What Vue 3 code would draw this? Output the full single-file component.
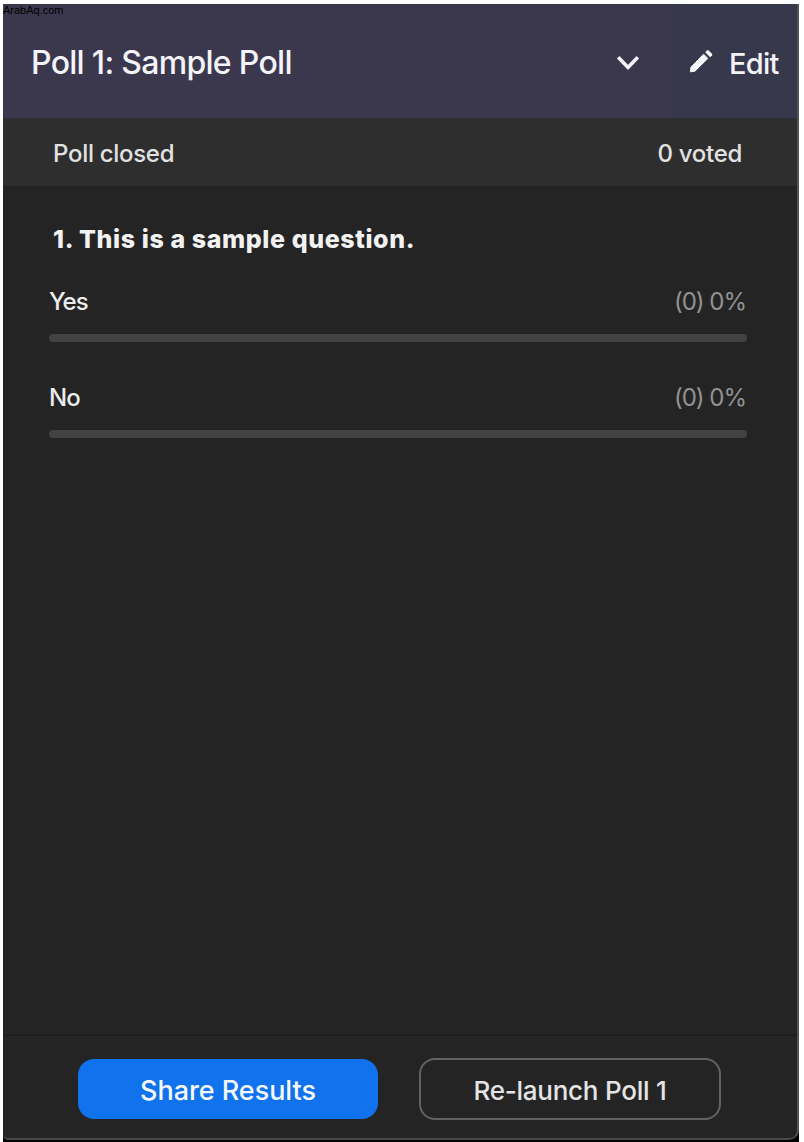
<script setup>
import { ref } from 'vue';

const answers = ref([
    { label: 'Yes', votes: 0, percent: 0 },
    { label: 'No', votes: 0, percent: 0 },
]);
</script>

<template>
    <div class="page">
        <span class="watermark">ArabAq.com</span>
        <div class="panel">
            <header class="header">
                <div class="picker">
                    <h1 class="title">Poll 1: Sample Poll</h1>
                    <svg class="chevron" width="24" height="18" viewBox="0 0 24 18">
                        <path d="M2.2 3.2 12 13.4 21.8 3.2" fill="none" stroke="#f4f3f8" stroke-width="3.6" />
                    </svg>
                </div>
                <div class="edit">
                    <svg width="24" height="24" viewBox="0 0 24 24">
                        <path d="M1.4 22.8 2 18.2 14.6 5.2 18.8 9.4 5.9 22.2Z" fill="#fafafd" stroke="#fafafd" stroke-linejoin="round" />
                        <path d="M16.2 3.2 18 1.4Q18.8.7 19.6 1.4L23 4.8Q23.7 5.6 23 6.4L21.2 8.2Z" fill="#fafafd" />
                    </svg>
                    <span class="edit-label">Edit</span>
                </div>
            </header>

            <div class="status">
                <span class="closed">Poll closed</span>
                <span class="voted">0 voted</span>
            </div>

            <main class="content">
                <h2 class="question">1. This is a sample question.</h2>
                <div v-for="answer in answers" :key="answer.label" class="answer">
                    <div class="row">
                        <span class="label">{{ answer.label }}</span>
                        <span class="result">({{ answer.votes }}) {{ answer.percent }}%</span>
                    </div>
                    <div class="bar">
                        <div class="fill" :style="{ width: answer.percent + '%' }"></div>
                    </div>
                </div>
            </main>

            <footer class="footer">
                <button class="button primary">Share Results</button>
                <button class="button outline">Re-launch Poll 1</button>
            </footer>
        </div>
    </div>
</template>

<style>
body {
    background-color: #fff;
}
</style>

<style scoped>
.page {
    position: relative;
    box-sizing: border-box;
    width: 804px;
    height: 1142px;
    padding: 4px 5px 0 3px;

    /* black strip behind the rounded bottom corners */
    background: linear-gradient(#000, #000) 3px 100% / 796px 12px no-repeat;
    font-family: Inter, "Liberation Sans", sans-serif;
    white-space: nowrap;
}

.watermark {
    position: absolute;
    left: 3px;
    top: 4px;

    font-family: "Liberation Sans", sans-serif;
    font-size: 11px;
    line-height: 13px;
    color: #000;
}

.panel {
    box-sizing: border-box;
    height: 1136px;

    display: flex;
    flex-direction: column;

    border-right: 2px solid #525252;
    border-bottom: 2px solid #484848;
    border-radius: 0 0 10px 5px;
    background-color: #242424;
    color: #ececec;
}

.header {
    flex: 0 0 114px;

    display: flex;
    background-color: #3b384e;
    color: #f4f3f8;
}

.picker {
    flex: 1 1 auto;
    box-sizing: border-box;
    padding: 3px 33px 0 28px;

    display: flex;
    justify-content: space-between;
    align-items: center;
}

.title {
    margin: 0;

    font-size: 32px;
    font-weight: 500;
    line-height: 40px;
    letter-spacing: -0.7px;
}

.edit {
    flex: 0 0 124px;
    box-sizing: border-box;
    padding: 4px 0 0 16px;

    display: flex;
    align-items: center;
    gap: 16px;

    background-color: #38384d;
}

.edit svg {
    margin-top: -5px;
}

.edit-label {
    font-size: 29px;
    font-weight: 500;
    letter-spacing: -0.7px;
}

.status {
    flex: 0 0 68px;
    box-sizing: border-box;
    padding: 2px 55px 0 50px;

    display: flex;
    justify-content: space-between;
    align-items: center;

    font-size: 24px;
    font-weight: 500;
    letter-spacing: -0.3px;
    background-color: #2e2e2e;
    color: #e2e2e2;
}

.content {
    flex: 1 1 auto;
    padding: 38px 50px 0 46px;
}

.question {
    margin: 0 0 33px 4px;

    font-size: 25px;
    font-weight: 800;
    line-height: 30px;
    letter-spacing: 0.6px;
    color: #f2f2f2;
}

.answer {
    margin-bottom: 41px;
}

.row {
    height: 30px;
    margin-bottom: 17px;

    display: flex;
    justify-content: space-between;

    font-size: 24px;
    line-height: 30px;
    letter-spacing: -1px;
}

.label {
    font-weight: 500;
}

.result {
    padding-right: 1px;

    color: #929292;
}

.bar {
    height: 8px;

    border-radius: 4px;
    background-color: #434343;
    overflow: hidden;
}

.fill {
    height: 100%;

    background-color: #1072ec;
}

.footer {
    flex: 0 0 104px;
    box-sizing: border-box;
    padding: 22px 76px 0 75px;

    display: flex;
    justify-content: space-between;
    align-items: flex-start;

    border-top: 2px solid #1d1d1d;
}

.button {
    box-sizing: border-box;
    padding: 0;

    border: none;
    border-radius: 16px;
    font-family: inherit;
    font-weight: 500;
}

.primary {
    width: 300px;
    height: 60px;
    margin-top: 1px;
    padding-top: 2px;

    font-size: 27px;
    letter-spacing: -0.05px;
    background-color: #1072ec;
    color: #f5f9ff;
}

.outline {
    width: 302px;
    height: 62px;
    padding-top: 2px;

    border: 2px solid #626262;
    font-size: 26px;
    letter-spacing: -0.25px;
    background-color: transparent;
    color: #e4e4e4;
}
</style>
